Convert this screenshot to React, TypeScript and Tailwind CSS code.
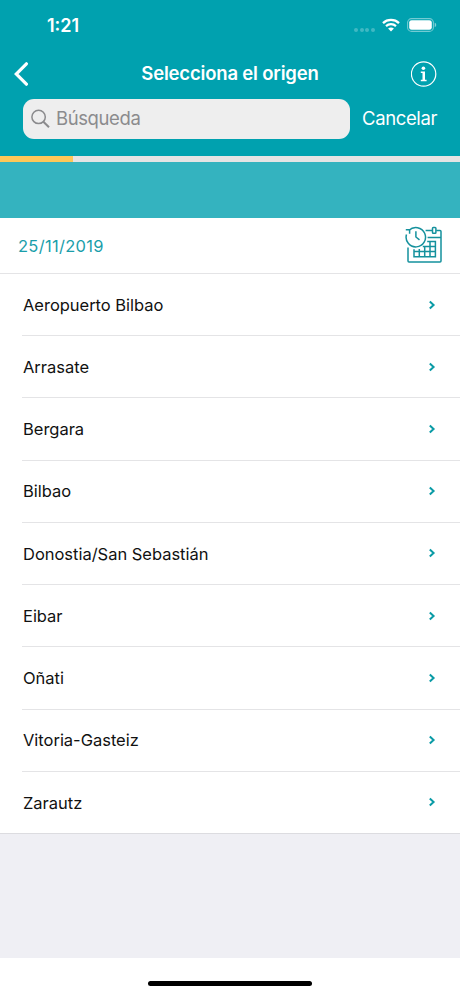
import clsx from "clsx";

const places = [
  "Aeropuerto Bilbao",
  "Arrasate",
  "Bergara",
  "Bilbao",
  "Donostia/San Sebastián",
  "Eibar",
  "Oñati",
  "Vitoria-Gasteiz",
  "Zarautz",
];

function WifiIcon() {
  return (
    <svg width="18" height="14" viewBox="0 0 18 14" fill="none">
      <path d="M1 5.1C5.4.9 12.6.9 17 5.1" stroke="white" strokeWidth="2.3" />
      <path d="M4 8.1c2.8-2.6 7.2-2.6 10 0" stroke="white" strokeWidth="2.2" />
      <path d="M9 13.4 6.1 10.5c1.7-1.5 4.1-1.5 5.8 0L9 13.4Z" fill="white" />
    </svg>
  );
}

function BatteryIcon() {
  return (
    <svg width="30" height="14" viewBox="0 0 30 14" fill="none">
      <rect
        x="0.6"
        y="0.6"
        width="25.8"
        height="12.8"
        rx="4"
        stroke="white"
        strokeOpacity="0.45"
        strokeWidth="1.1"
      />
      <rect x="2.2" y="2.2" width="22.6" height="9.6" rx="2.4" fill="white" />
      <path d="M27.7 4.8c2 .6 2 3.8 0 4.4V4.8Z" fill="white" fillOpacity="0.5" />
    </svg>
  );
}

function InfoIcon() {
  return (
    <svg width="26" height="26" viewBox="0 0 26 26" fill="none">
      <circle cx="12.6" cy="13" r="12.2" stroke="white" strokeWidth="1.2" />
      <circle cx="12.4" cy="7.2" r="1.8" fill="white" />
      <path
        d="M9.8 10.6h4.2v8.2h1.6v1.4H9.8v-1.4h1.7V12H9.8v-1.4Z"
        fill="white"
      />
    </svg>
  );
}

function CalendarIcon() {
  return (
    <svg
      width="38"
      height="38"
      viewBox="0 0 38 38"
      fill="none"
      stroke="#15919d"
      strokeWidth="1.5"
    >
      <path d="M3 21.5V35.1q0 1 1 1H35q1 0 1-1V5.6q0-1-1-1H31.2M27.2 4.6H20.6M22.6 11.5H36" />
      <rect x="27.5" y="1.5" width="3.4" height="5.8" rx="0.8" />
      <path d="M22.2 15.5h8.2v15.2H9V23.2M17.8 20.5h12.6M9 25.5h21.4M14.3 23v7.7M19.7 19.8v10.9M25 15.5v15.2" />
      <path d="M4 4.3A9.7 9.7 0 1 1 1.5 8.5" />
      <path d="M.8 3.8H4.6V7.8M10.9 5.3V11l3.6 2.8" />
    </svg>
  );
}

function StatusBar() {
  return (
    <div className="flex h-[50px] items-center pl-[47px] pr-[23px]">
      <span className="pt-px text-[18px] font-semibold leading-5">1:21</span>
      <div className="ml-auto flex items-center">
        <div className="mr-[7px] mt-[9px] flex gap-[1.6px]">
          {[0, 1, 2, 3].map((dot) => (
            <span key={dot} className="size-1 rounded-full bg-white/25" />
          ))}
        </div>
        <WifiIcon />
        <div className="ml-[7px]">
          <BatteryIcon />
        </div>
      </div>
    </div>
  );
}

function Header() {
  return (
    <header className="h-[156px] bg-[#00a1af] text-white">
      <StatusBar />

      <div className="flex h-[49px] items-center justify-between pb-0.5 pl-3.5 pr-[23px]">
        <svg width="26" height="26" viewBox="0 0 26 26" fill="none">
          <path
            d="M12.4 2.8 2.2 13l10.2 10.2"
            stroke="white"
            strokeWidth="3.2"
            strokeLinecap="round"
          />
        </svg>
        <h1 className="pl-[9px] text-[18.5px] font-semibold tracking-[-0.18px]">
          Selecciona el origen
        </h1>
        <InfoIcon />
      </div>

      <div className="flex items-center pl-[23px]">
        <div className="flex h-10 w-[327px] items-center rounded-[11px] bg-[#eeeeee] pl-2 text-[#8b8b8d]">
          <svg width="20" height="20" viewBox="0 0 20 20" fill="none">
            <circle cx="7.6" cy="7.9" r="6.7" stroke="currentColor" strokeWidth="1.5" />
            <path d="m12.4 12.7 5.6 5.6" stroke="currentColor" strokeWidth="2" />
          </svg>
          <span className="ml-[5px] text-[18.5px] tracking-[-0.4px]">
            Búsqueda
          </span>
        </div>
        <span className="ml-3 text-[18.5px] tracking-[-0.38px]">Cancelar</span>
      </div>
    </header>
  );
}

function PlaceRow({ name, last }: { name: string; last: boolean }) {
  return (
    <li className={clsx("flex", !last && "pl-[22px]")}>
      <div
        className={clsx(
          "flex grow items-center justify-between border-b pr-6",
          last ? "border-[#dcdce0] pl-[23px]" : "border-[#e4e4e6] pl-px",
        )}
      >
        <span className="pt-px text-[16.5px] tracking-[-0.02px]">{name}</span>
        <svg width="8" height="10" viewBox="0 0 8 10" fill="none">
          <path d="M1.8 1.4 5.6 5 1.8 8.6" stroke="#0a9ba6" strokeWidth="2" />
        </svg>
      </div>
    </li>
  );
}

export default function App() {
  return (
    <main className="flex h-[996px] w-[460px] flex-col overflow-hidden bg-[#efeff4] font-[Inter,sans-serif] text-[#111111]">
      <Header />

      <div className="h-1.5 bg-[#e5e4e4]">
        <div className="h-full w-[73px] bg-[#fdc858]" />
      </div>
      <div className="h-14 bg-[#34b3bf]" />

      <div className="flex h-14 items-center justify-between border-b border-[#e4e4e6] bg-white pl-[18px] pr-[17px]">
        <span className="pt-0.5 text-[16.5px] tracking-[0.3px] text-[#1a9eaa]">
          25/11/2019
        </span>
        <div className="pb-px">
          <CalendarIcon />
        </div>
      </div>

      <ul className="grid h-[560px] grid-rows-9 bg-white">
        {places.map((name, i) => (
          <PlaceRow key={name} name={name} last={i === places.length - 1} />
        ))}
      </ul>

      <footer className="mt-auto flex h-[38px] justify-center bg-white pt-[23px]">
        <div className="h-[5px] w-[164px] rounded-full bg-black" />
      </footer>
    </main>
  );
}
